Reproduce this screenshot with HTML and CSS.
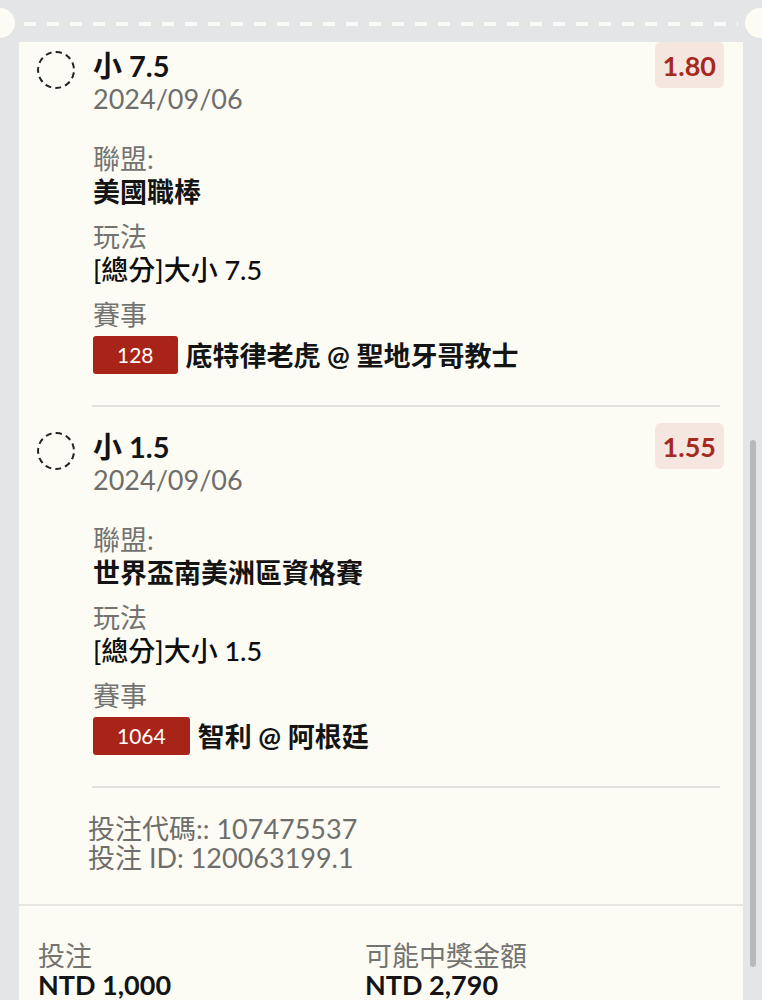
FILE: index.html
```html
<!DOCTYPE html>
<html lang="zh-Hant">
<head>
    <meta charset="UTF-8">
    <meta name="viewport" content="width=device-width, initial-scale=1.0">
    <title>投注單</title>
    <link rel="stylesheet" href="styles.css">
</head>
<body>

    <div class="tear">
        <span class="notch notch-left"></span>
        <span class="dashes"></span>
        <span class="notch notch-right"></span>
    </div>

    <div class="viewport">
        <div class="card">

            <div class="leg leg-first">
                <span class="radio"></span>
                <div class="leg-body">
                    <div class="pick">小 7.5</div>
                    <div class="date">2024/09/06</div>
                    <div class="field">
                        <div class="label">聯盟:</div>
                        <div class="value">美國職棒</div>
                    </div>
                    <div class="field">
                        <div class="label">玩法</div>
                        <div class="value value-play">[總分]大小 7.5</div>
                    </div>
                    <div class="field">
                        <div class="label">賽事</div>
                        <div class="match">
                            <span class="match-no">128</span>
                            <span class="match-name">底特律老虎 @ 聖地牙哥教士</span>
                        </div>
                    </div>
                </div>
                <span class="odds">1.80</span>
            </div>

            <div class="divider"></div>

            <div class="leg">
                <span class="radio"></span>
                <div class="leg-body">
                    <div class="pick">小 1.5</div>
                    <div class="date">2024/09/06</div>
                    <div class="field">
                        <div class="label">聯盟:</div>
                        <div class="value">世界盃南美洲區資格賽</div>
                    </div>
                    <div class="field">
                        <div class="label">玩法</div>
                        <div class="value value-play">[總分]大小 1.5</div>
                    </div>
                    <div class="field">
                        <div class="label">賽事</div>
                        <div class="match">
                            <span class="match-no">1064</span>
                            <span class="match-name">智利 @ 阿根廷</span>
                        </div>
                    </div>
                </div>
                <span class="odds">1.55</span>
            </div>

            <div class="divider"></div>

            <div class="meta">
                <div>投注代碼:: 107475537</div>
                <div>投注 ID: 120063199.1</div>
            </div>

            <div class="totals">
                <div class="total">
                    <div class="label">投注</div>
                    <div class="amount">NTD 1,000</div>
                </div>
                <div class="total">
                    <div class="label">可能中獎金額</div>
                    <div class="amount">NTD 2,790</div>
                </div>
            </div>

        </div>

        <div class="scrollbar">
            <span class="thumb"></span>
        </div>
    </div>

</body>
</html>
```

FILE: styles.css
```css
* {
    margin: 0;
    padding: 0;
    box-sizing: border-box;
}

body {
    height: 1000px;
    overflow: hidden;
    background-color: #e4e5e7;
    font-family: Lato, "Noto Sans CJK TC", sans-serif;
    font-size: 27px;
    color: #141414;
}

/* borde superior tipo ticket */
.tear {
    height: 42px;
    display: flex;
    align-items: flex-start;
}

.notch {
    height: 30px;
    margin-top: 8px;
    background-color: #fdfcf4;
}

.notch-left {
    width: 15px;
    border-radius: 0 15px 15px 0;
}

.notch-right {
    width: 17px;
    border-radius: 17px 0 0 17px;
}

.dashes {
    flex: 1;
    height: 4px;
    margin: 22px 7px 0 9px;
    background: repeating-linear-gradient(to right, #fbfbf6 0 12px, transparent 12px 23px);
}

.viewport {
    display: flex;
    padding-left: 19px;
    height: 958px;
}

.card {
    width: 724px;
    background-color: #fdfcf4;
}

/* cada apuesta */
.leg {
    display: flex;
    align-items: flex-start;
    gap: 18px;
    padding: 16px 19px 31px 18px;
}

.leg-first {
    padding-top: 0;
}

.radio {
    flex: none;
    width: 38px;
    height: 38px;
    margin-top: 9px;
    border: 2px dashed #222;
    border-radius: 50%;
}

.leg-body {
    flex: 1;
}

.pick {
    margin-top: 7px;
    font-size: 29px;
    font-weight: 700;
    line-height: 33px;
}

.date {
    line-height: 33px;
    color: #6e6e6c;
}

.field {
    margin-top: 12px;
}

.date + .field {
    margin-top: 27px;
}

.label {
    line-height: 33px;
    color: #737371;
}

.value {
    line-height: 33px;
    font-weight: 700;
}

.value-play {
    font-weight: 500;
    color: #0e0e0e;
}

.match {
    display: flex;
    align-items: center;
    gap: 8px;
    margin-top: 4px;
}

.match-no {
    height: 38px;
    padding: 0 24px;
    display: flex;
    align-items: center;
    font-size: 21px;
    color: #fff;
    background-color: #a92418;
    border-radius: 3px;
}

.match-name {
    font-weight: 700;
}

.odds {
    flex: none;
    height: 46px;
    padding: 0 8px;
    display: flex;
    align-items: center;
    font-weight: 700;
    color: #a6291f;
    background-color: #f5e7e0;
    border-radius: 6px;
}

.divider {
    height: 2px;
    margin: 0 23px 0 73px;
    background-color: #e4e2dc;
}

.meta {
    padding: 26px 0 32px 69px;
    line-height: 29px;
    color: #6e6e6c;
}

.totals {
    display: grid;
    grid-template-columns: 327px 1fr;
    padding: 35px 19px 0;
    border-top: 2px solid #e7e5df;
}

.total .label {
    line-height: 30px;
}

.amount {
    line-height: 28px;
    font-weight: 700;
}

.scrollbar {
    flex: 1;
    padding-left: 7px;
}

.thumb {
    display: block;
    width: 6px;
    height: 527px;
    margin-top: 398px;
    border-radius: 3px;
    background-color: #b8b9bb;
}
```
